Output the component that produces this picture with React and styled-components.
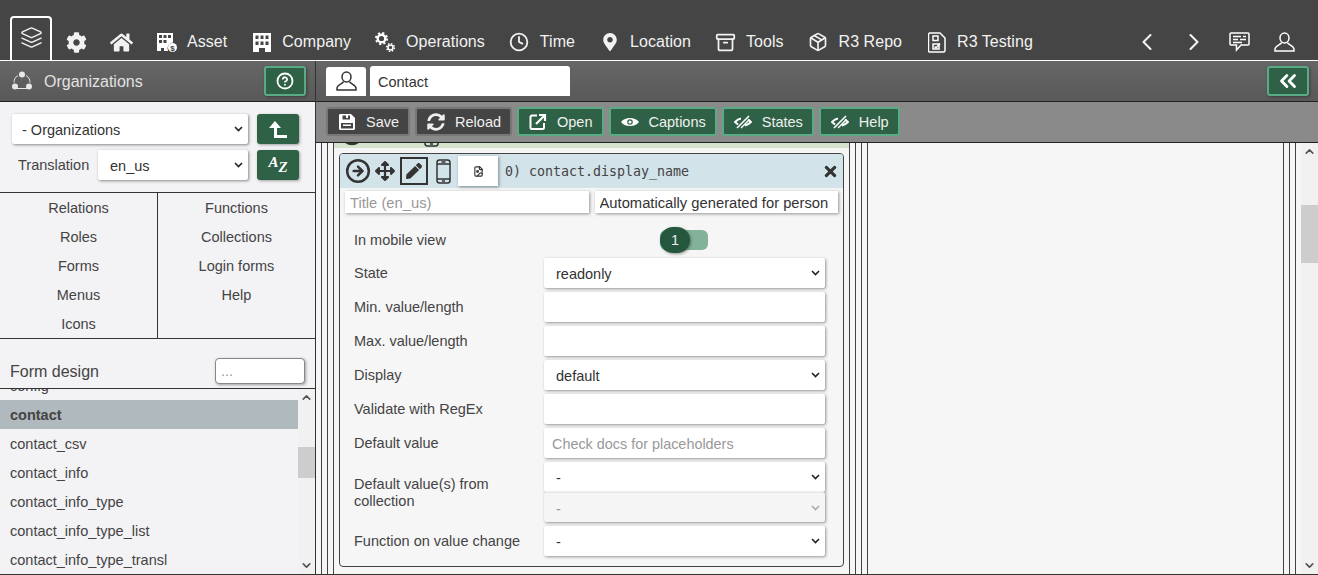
import styled, { createGlobalStyle } from "styled-components";
import {
  LuLayers, LuClock, LuArchive, LuPackage, LuChevronLeft, LuChevronRight, LuChevronsLeft,
  LuCircleHelp, LuCircleArrowRight, LuFileImage, LuChevronUp, LuChevronDown,
} from "react-icons/lu";
import { FaCog, FaHome, FaMapMarkerAlt, FaSyncAlt, FaArrowsAlt, FaPen, FaTimes } from "react-icons/fa";

const Global = createGlobalStyle`
  html, body { margin: 0; padding: 0; height: 575px; overflow: hidden; }
  body { font-family: "Liberation Sans", Arial, sans-serif; background: #f6f6f6; }
  * { box-sizing: border-box; }
`;

const white = "#fff";

const chevron = (color) =>
  `url("data:image/svg+xml,%3Csvg xmlns='http://www.w3.org/2000/svg' width='9' height='6'%3E%3Cpath d='M1 1l3.500 3.500L8 1' fill='none' stroke='${color}' stroke-width='1.600'/%3E%3C/svg%3E")`;

const AssetIcon = () => (
  <svg width="20" height="20" viewBox="0 0 20 20" fill={white}>
    <path fillRule="evenodd" d="M0 1h16v9.500a6 6 0 0 0-5 8.500H7v-3H4v3H0zM2 3v3h3V3zm4.500 0v3h3V3zM11 3v3h3V3zM2 8v3h3V8zm4.500 0v3h3V8z" />
    <circle cx="15.500" cy="15.500" r="4.500" />
    <text x="15.500" y="18.500" fontSize="8" fontWeight="700" textAnchor="middle" fill="#444" fontFamily="Liberation Sans">$</text>
  </svg>
);

const CompanyIcon = () => (
  <svg width="18" height="20" viewBox="0 0 18 20" fill={white}>
    <path fillRule="evenodd" d="M0 1h18v19h-6v-4H6v4H0zM2.500 3.500v3.500h3V3.500zm5 0v3.500h3V3.500zm5 0v3.500h3V3.500zM2.500 9.500v3.500h3V9.500zm5 0v3.500h3V9.500zm5 0v3.500h3V9.500z" />
  </svg>
);

const OperationsIcon = () => (
  <svg width="21" height="21" viewBox="0 0 21 21" fill="none" stroke={white}>
    <circle cx="6.500" cy="6.500" r="3.800" strokeWidth="2.400" />
    <circle cx="6.500" cy="6.500" r="5.600" strokeWidth="1.800" strokeDasharray="2.200 2.200" />
    <circle cx="15.500" cy="15.500" r="2.500" strokeWidth="1.600" />
    <circle cx="15.500" cy="15.500" r="3.900" strokeWidth="1.400" strokeDasharray="1.530 1.530" />
  </svg>
);

const TestingIcon = () => (
  <svg width="18" height="21" viewBox="0 0 18 21" fill="none" stroke={white} strokeWidth="1.500">
    <path d="M1.500 1h10.500l5 5v12.500a1.500 1.500 0 0 1-1.500 1.500h-14a1 1 0 0 1-1-1V2z" />
    <rect x="5" y="4" width="5" height="4.500" />
    <rect x="5" y="12" width="6" height="5" />
    <path d="M6.500 14.500l1.500 1.500 4-4.500" />
  </svg>
);

const ChatIcon = () => (
  <svg width="21" height="20" viewBox="0 0 21 20" fill="none" stroke={white} strokeWidth="1.500">
    <path d="M2 1h17a1 1 0 0 1 1 1v10a1 1 0 0 1-1 1h-7l-4.500 5v-5H2a1 1 0 0 1-1-1V2a1 1 0 0 1 1-1z" />
    <path d="M4 4.500h8M14 4.500h3M4 7.500h5M11 7.500h6M4 10.500h9" strokeWidth="1.600" />
  </svg>
);

const UserIcon = ({ color = white }) => (
  <svg width="21" height="20" viewBox="0 0 21 20" fill="none" stroke={color} strokeWidth="1.500">
    <ellipse cx="10.500" cy="6" rx="4.500" ry="5" />
    <path d="M7.500 10.500c0 2-6.500 3-6.500 6.500v2h19v-2c0-3.500-6.500-4.500-6.500-6.500" />
  </svg>
);

const OrgIcon = () => (
  <svg width="20" height="20" viewBox="0 0 20 20" fill="#e8e8e8">
    <path d="M6 4.500a8 8 0 0 0-4 7M14 4.500a8 8 0 0 1 4 7M5 17.500h10" fill="none" stroke="#e8e8e8" strokeWidth="1" />
    <circle cx="10" cy="3.500" r="3" />
    <circle cx="3" cy="15.500" r="3" />
    <circle cx="17" cy="15.500" r="3" />
  </svg>
);

const SaveIcon = () => (
  <svg width="18" height="18" viewBox="0 0 18 18" fill={white}>
    <path fillRule="evenodd" d="M2 1h11l4 4v10.500a1.500 1.500 0 0 1-1.500 1.500h-13A1.500 1.500 0 0 1 1 15.500v-13A1.500 1.500 0 0 1 2 1zm2.500 1.500v4h7.500v-4h-2v2.500h-2V2.500zM3 10v5.500h12V10zm2 1.500h8V13H5zm0 2.200h8" />
  </svg>
);

const OpenIcon = () => (
  <svg width="18" height="18" viewBox="0 0 18 18" fill="none" stroke={white} strokeWidth="2">
    <path d="M8 2.500H3a1.500 1.500 0 0 0-1.500 1.500v10.500A1.500 1.500 0 0 0 3 16h10.500a1.500 1.500 0 0 0 1.500-1.500V10" />
    <path d="M7 11l8-8M10 2h6v6" strokeWidth="2.200" />
  </svg>
);

const EyeIcon = () => (
  <svg width="18" height="18" viewBox="0 0 18 18" fill={white}>
    <path fillRule="evenodd" d="M0 9c2.500-3 5.500-4 9-4s6.500 1 9 4c-2.500 3-5.500 4-9 4s-6.500-1-9-4zm9-2.800a2.800 2.800 0 1 0 0 5.600 2.800 2.800 0 0 0 0-5.600z" />
    <circle cx="9" cy="9" r="1.600" />
  </svg>
);

const StatesIcon = () => (
  <svg width="18" height="18" viewBox="0 0 18 18" fill="none" stroke={white} strokeWidth="1.800">
    <path d="M7 5.500c-2.500.5-4.500 2-6 3.500 1 1 2 1.800 3.200 2.400M11 12.500c2.500-.5 4.500-2 6-3.500-1-1-2-1.800-3.200-2.400" />
    <path d="M3 15L15 3" strokeWidth="1.600" />
    <path d="M7 15L15.500 6.500" strokeWidth="1.400" />
  </svg>
);

const PhoneIcon = () => (
  <svg width="15" height="25" viewBox="0 0 15 25" fill="none" stroke="#333" strokeWidth="1.500">
    <rect x="1" y="1" width="13" height="23" rx="2.500" />
    <path d="M1 5h13M1 20h13M5.500 3h4M6 22h3" />
  </svg>
);

const UpTurnIcon = () => (
  <svg width="18" height="17" viewBox="0 0 18 17" fill={white}>
    <path d="M6 0l6 7H8v7h10v3H5V7H0z" />
  </svg>
);

const navItems = [
  { label: "Asset", icon: <AssetIcon /> },
  { label: "Company", icon: <CompanyIcon /> },
  { label: "Operations", icon: <OperationsIcon /> },
  { label: "Time", icon: <LuClock size={20} strokeWidth={2.2} /> },
  { label: "Location", icon: <FaMapMarkerAlt size={18} /> },
  { label: "Tools", icon: <LuArchive size={21} strokeWidth={2} /> },
  { label: "R3 Repo", icon: <LuPackage size={20} strokeWidth={2} /> },
  { label: "R3 Testing", icon: <TestingIcon /> },
];

const menuLeft = ["Relations", "Roles", "Forms", "Menus", "Icons"];
const menuRight = ["Functions", "Collections", "Login forms", "Help"];
const listItems = ["contact_csv", "contact_info", "contact_info_type", "contact_info_type_list", "contact_info_type_transl"];

const toolButtons = [
  { label: "Save", icon: <SaveIcon />, dark: true },
  { label: "Reload", icon: <FaSyncAlt size={18} />, dark: true },
  { label: "Open", icon: <OpenIcon /> },
  { label: "Captions", icon: <EyeIcon /> },
  { label: "States", icon: <StatesIcon /> },
  { label: "Help", icon: <StatesIcon /> },
];

const Scrollbar = ({ top, height }) => (
  <Track>
    <Arrow><LuChevronUp size={13} strokeWidth={3} /></Arrow>
    <Thumb $top={top} $height={height} />
    <ArrowBottom><LuChevronDown size={13} strokeWidth={3} /></ArrowBottom>
  </Track>
);

const App = () => {
  return (
    <>
      <Global />
      <Page>
        <TopBar>
          <ActiveTab><LuLayers size={23} strokeWidth={1.5} /></ActiveTab>
          <IconItem><FaCog size={21} /></IconItem>
          <IconItem><FaHome size={23} /></IconItem>
          {navItems.map((item) => (
            <NavItem key={item.label}>
              <NavIcon>{item.icon}</NavIcon>
              {item.label}
            </NavItem>
          ))}
          <NavRight>
            <RightIcon $w={46}><LuChevronLeft size={28} strokeWidth={1.8} /></RightIcon>
            <RightIcon $w={48}><LuChevronRight size={28} strokeWidth={1.8} /></RightIcon>
            <RightIcon $w={43}><ChatIcon /></RightIcon>
            <RightIcon $w={46}><UserIcon /></RightIcon>
          </NavRight>
        </TopBar>
        <Body>
          <Sidebar>
            <HeadBar>
              <OrgIcon />
              <HeadTitle>Organizations</HeadTitle>
              <GreenSquare $outlined><LuCircleHelp size={18} strokeWidth={2.4} /></GreenSquare>
            </HeadBar>
            <Selects>
              <SelectRow>
                <SideSelect $wide defaultValue="org">
                  <option value="org">- Organizations</option>
                </SideSelect>
                <GreenSquare><UpTurnIcon /></GreenSquare>
              </SelectRow>
              <SelectRow>
                <TransLabel>Translation</TransLabel>
                <SideSelect defaultValue="en_us">
                  <option value="en_us">en_us</option>
                </SideSelect>
                <GreenSquare>
                  <AzMark>A<AzLow>Z</AzLow></AzMark>
                </GreenSquare>
              </SelectRow>
            </Selects>
            <Menu>
              <MenuCol>
                {menuLeft.map((m) => <MenuLink key={m}>{m}</MenuLink>)}
              </MenuCol>
              <MenuCol>
                {menuRight.map((m) => <MenuLink key={m}>{m}</MenuLink>)}
              </MenuCol>
            </Menu>
            <DesignHead>
              <DesignTitle>Form design</DesignTitle>
              <SearchInput placeholder="..." />
            </DesignHead>
            <ListWrap>
              <List>
                <ClippedRow>config</ClippedRow>
                <ListRow $active>contact</ListRow>
                {listItems.map((l) => <ListRow key={l}>{l}</ListRow>)}
              </List>
              <Scrollbar top={41} height={31} />
            </ListWrap>
          </Sidebar>
          <Main>
            <TabBar>
              <UserTile><UserIcon color="#333" /></UserTile>
              <ContactTab>Contact</ContactTab>
              <TabBarEnd>
                <GreenSquare $outlined><LuChevronsLeft size={26} strokeWidth={2.6} /></GreenSquare>
              </TabBarEnd>
            </TabBar>
            <Toolbar>
              {toolButtons.map((b) => (
                <ToolButton key={b.label} $dark={b.dark}>
                  {b.icon}
                  {b.label}
                </ToolButton>
              ))}
            </Toolbar>
            <ScrollArea>
              <Content>
                <OuterBox>
                  <LeftBox>
                    <InnerBox>
                      <GreenBand>
                        <BandIcons>
                          <LuCircleArrowRight size={24} strokeWidth={2.4} />
                          <FaArrowsAlt size={20} />
                          <PhoneIcon />
                        </BandIcons>
                      </GreenBand>
                      <Card>
                        <CardHead>
                          <LuCircleArrowRight size={26} strokeWidth={2.3} />
                          <MoveWrap><FaArrowsAlt size={20} /></MoveWrap>
                          <PencilBox><FaPen size={16} /></PencilBox>
                          <PhoneWrap><PhoneIcon /></PhoneWrap>
                          <FieldTile><LuFileImage size={11} strokeWidth={2.4} /></FieldTile>
                          <FieldName>0) contact.display_name</FieldName>
                          <CloseWrap><FaTimes size={17} /></CloseWrap>
                        </CardHead>
                        <TitleRow>
                          <TitleInput placeholder="Title (en_us)" />
                          <TitleInput defaultValue="Automatically generated for person" />
                        </TitleRow>
                        <FormGrid>
                          <FieldLabel>In mobile view</FieldLabel>
                          <ToggleCell>
                            <ToggleTrack><ToggleKnob>1</ToggleKnob></ToggleTrack>
                          </ToggleCell>
                          <FieldLabel>State</FieldLabel>
                          <FieldSelect defaultValue="readonly"><option value="readonly">readonly</option></FieldSelect>
                          <FieldLabel>Min. value/length</FieldLabel>
                          <FieldInput />
                          <FieldLabel>Max. value/length</FieldLabel>
                          <FieldInput />
                          <FieldLabel>Display</FieldLabel>
                          <FieldSelect defaultValue="default"><option value="default">default</option></FieldSelect>
                          <FieldLabel>Validate with RegEx</FieldLabel>
                          <FieldInput />
                          <FieldLabel>Default value</FieldLabel>
                          <FieldInput placeholder="Check docs for placeholders" />
                          <FieldLabel $pushed>Default value(s) from collection</FieldLabel>
                          <SelectStack>
                            <FieldSelect defaultValue="-"><option value="-">-</option></FieldSelect>
                            <FieldSelect disabled defaultValue="-"><option value="-">-</option></FieldSelect>
                          </SelectStack>
                          <FieldLabel>Function on value change</FieldLabel>
                          <FieldSelect defaultValue="-"><option value="-">-</option></FieldSelect>
                        </FormGrid>
                      </Card>
                    </InnerBox>
                  </LeftBox>
                  <RightBox>
                    <RightInner />
                  </RightBox>
                </OuterBox>
              </Content>
              <Scrollbar top={45} height={58} />
            </ScrollArea>
          </Main>
        </Body>
      </Page>
    </>
  );
};

export default App;

const Page = styled.div`
  width: 1318px;
  height: 575px;
  display: flex;
  flex-direction: column;
  overflow: hidden;
  border-bottom: 1px solid #333;
`;

const TopBar = styled.div`
  height: 61px;
  flex: none;
  display: flex;
  align-items: flex-end;
  padding-left: 10px;
  background: #454545;
  border-bottom: 1px solid #fff;
  color: #f2f2f2;
`;

const ActiveTab = styled.div`
  width: 42px;
  height: 44px;
  margin-right: 2px;
  padding-bottom: 4px;
  display: flex;
  align-items: center;
  justify-content: center;
  border: 2px solid #fff;
  border-bottom: none;
  border-radius: 4px 4px 0 0;
`;

const IconItem = styled.div`
  width: 45px;
  height: 44px;
  padding-top: 8px;
  display: flex;
  align-items: center;
  justify-content: center;
  flex: none;
`;

const NavItem = styled.div`
  height: 44px;
  padding: 8px 12px 0;
  display: flex;
  align-items: center;
  gap: 10px;
  font-size: 16px;
  letter-spacing: 0.05px;
  white-space: nowrap;
`;

const NavIcon = styled.span`
  width: 21px;
  display: flex;
  justify-content: center;
  align-items: center;
`;

const NavRight = styled.div`
  margin-left: auto;
  padding-right: 11px;
  display: flex;
`;

const RightIcon = styled.div`
  width: ${(p) => p.$w}px;
  height: 44px;
  padding-top: 8px;
  display: flex;
  align-items: center;
  justify-content: center;
`;

const Body = styled.div`
  flex: 1;
  min-height: 0;
  display: flex;
`;

const Sidebar = styled.div`
  width: 316px;
  flex: none;
  display: flex;
  flex-direction: column;
  background: #f3f2f5;
  border-right: 1px solid #333;
`;

const HeadBar = styled.div`
  height: 41px;
  flex: none;
  display: flex;
  align-items: center;
  padding: 0 9px 0 12px;
  background: linear-gradient(#666, #595959);
  border-bottom: 1px solid #222;
`;

const HeadTitle = styled.span`
  flex: 1;
  margin-left: 12px;
  padding-top: 2px;
  font-size: 16px;
  color: #e2e2e2;
`;

const GreenSquare = styled.div`
  width: 42px;
  height: 30px;
  flex: none;
  display: flex;
  align-items: center;
  justify-content: center;
  border-radius: 3px;
  color: #fff;
  background: #2e6145;
  border: ${(p) => (p.$outlined ? "2px solid #5aaa85" : "none")};
  box-shadow: 1px 1px 3px rgba(0, 0, 0, 0.35);
`;

const Selects = styled.div`
  height: 91px;
  flex: none;
  padding: 12px 16px 0 12px;
  display: flex;
  flex-direction: column;
  gap: 6px;
  border-bottom: 1px solid #333;
`;

const SelectRow = styled.div`
  display: flex;
  align-items: center;
`;

const SideSelect = styled.select`
  height: 30px;
  width: ${(p) => (p.$wide ? "236px" : "150px")};
  margin-right: 9px;
  padding: 2px 8px 0 ${(p) => (p.$wide ? "10px" : "12px")};
  border: none;
  border-radius: 2px;
  appearance: none;
  background: #fff ${chevron("%23222")} no-repeat right 5px center;
  color: #333;
  font: 14.5px "Liberation Sans", Arial, sans-serif;
  box-shadow: 1px 1px 3px rgba(0, 0, 0, 0.45);
`;

const TransLabel = styled.span`
  width: 86px;
  padding-left: 6px;
  font-size: 14.5px;
  color: #444;
`;

const AzMark = styled.span`
  font: italic 700 15px "Liberation Serif", serif;
  color: #fff;
  margin-top: -6px;
`;

const AzLow = styled.span`
  display: inline-block;
  transform: translateY(5px);
`;

const Menu = styled.div`
  height: 146px;
  flex: none;
  display: grid;
  grid-template-columns: 158px 157px;
  border-bottom: 1px solid #333;
`;

const MenuCol = styled.div`
  &:first-child {
    border-right: 1px solid #333;
  }
`;

const MenuLink = styled.div`
  height: 29px;
  display: flex;
  align-items: center;
  justify-content: center;
  font-size: 14.5px;
  color: #444;
`;

const DesignHead = styled.div`
  height: 50px;
  flex: none;
  display: flex;
  align-items: flex-end;
  justify-content: space-between;
  padding: 0 10px 4px;
  border-bottom: 1px solid #333;
`;

const DesignTitle = styled.span`
  font-size: 16px;
  color: #444;
  line-height: 28px;
  margin-bottom: -2px;
`;

const SearchInput = styled.input`
  width: 90px;
  height: 26px;
  padding: 0 5px;
  border: 1px solid #888;
  border-radius: 4px;
  background: #fff;
  font: 14.5px "Liberation Sans", Arial, sans-serif;
  box-shadow: 1px 1px 3px rgba(0, 0, 0, 0.35);
  &::placeholder { color: #999; }
`;

const ListWrap = styled.div`
  flex: 1;
  min-height: 0;
  display: flex;
`;

const List = styled.div`
  flex: 1;
  overflow: hidden;
`;

const ListRow = styled.div`
  height: 29px;
  display: flex;
  align-items: center;
  padding-left: 10px;
  font-size: 14.5px;
  color: #444;
  font-weight: ${(p) => (p.$active ? 700 : 400)};
  background: ${(p) => (p.$active ? "#b0b9bd" : "transparent")};
`;

const ClippedRow = styled(ListRow)`
  margin-top: -18px;
`;

const Track = styled.div`
  width: 17px;
  flex: none;
  display: flex;
  flex-direction: column;
  background: #f1f1f1;
  color: #555;
`;

const Arrow = styled.div`
  height: 17px;
  flex: none;
  display: flex;
  align-items: center;
  justify-content: center;
`;

const ArrowBottom = styled(Arrow)`
  margin-top: auto;
`;

const Thumb = styled.div`
  margin-top: ${(p) => p.$top}px;
  height: ${(p) => p.$height}px;
  background: #cdcdcd;
`;

const Main = styled.div`
  flex: 1;
  min-width: 0;
  display: flex;
  flex-direction: column;
`;

const TabBar = styled.div`
  height: 41px;
  flex: none;
  display: flex;
  align-items: center;
  padding: 0 9px 0 10px;
  background: linear-gradient(#666, #595959);
  border-bottom: 1px solid #222;
`;

const UserTile = styled.div`
  width: 40px;
  height: 29px;
  display: flex;
  align-items: center;
  justify-content: center;
  background: #fff;
  border-radius: 3px 3px 0 0;
`;

const ContactTab = styled.div`
  width: 200px;
  height: 30px;
  margin-left: 4px;
  padding: 2px 0 0 8px;
  display: flex;
  align-items: center;
  background: #fff;
  border-radius: 3px 3px 0 0;
  font-size: 14.5px;
  color: #333;
`;

const TabBarEnd = styled.div`
  margin-left: auto;
`;

const Toolbar = styled.div`
  height: 41px;
  flex: none;
  display: flex;
  align-items: center;
  gap: 5px;
  padding: 0 0 1px 10px;
  background: #8a8a8a;
  border-bottom: 1px solid #222;
`;

const ToolButton = styled.div`
  height: 29px;
  padding: 0 9px 0 10px;
  display: flex;
  align-items: center;
  gap: 10px;
  font-size: 14.5px;
  color: #f0f0f0;
  border-radius: 3px;
  background: ${(p) => (p.$dark ? "#444" : "#2e6145")};
  border: 2px solid ${(p) => (p.$dark ? "#777" : "#5aaa85")};
`;

const ScrollArea = styled.div`
  flex: 1;
  min-height: 0;
  display: flex;
`;

const Content = styled.div`
  flex: 1;
  min-width: 0;
  padding: 0 5px;
  background: #f6f6f6;
  overflow: hidden;
`;

const OuterBox = styled.div`
  height: 100%;
  padding: 0 5px;
  display: flex;
  gap: 5px;
  border-left: 1px solid #444;
  border-right: 1px solid #444;
`;

const LeftBox = styled.div`
  width: 529px;
  flex: none;
  padding: 0 5px;
  border-left: 1px solid #444;
  border-right: 1px solid #444;
`;

const InnerBox = styled.div`
  height: 100%;
  border-left: 1px solid #444;
  border-right: 1px solid #444;
`;

const RightBox = styled.div`
  flex: 1;
  padding: 0 5px;
  border-left: 1px solid #444;
  border-right: 1px solid #444;
`;

const RightInner = styled.div`
  height: 100%;
  border-left: 1px solid #444;
  border-right: 1px solid #444;
`;

const GreenBand = styled.div`
  height: 5px;
  overflow: hidden;
  background: #d4e4cc;
  color: #333;
`;

const BandIcons = styled.div`
  margin-top: -21px;
  padding-left: 6px;
  display: flex;
  gap: 20px;
`;

const Card = styled.div`
  margin: 5px 5px 0;
  height: 414px;
  width: 505px;
  border: 1px solid #444;
  border-radius: 4px;
  overflow: hidden;
`;

const CardHead = styled.div`
  height: 34px;
  display: flex;
  align-items: center;
  padding-left: 5px;
  background: #d2e3ea;
  color: #333;
`;

const MoveWrap = styled.span`
  display: flex;
  margin-left: 4px;
`;

const PencilBox = styled.span`
  width: 28px;
  height: 28px;
  margin-left: 5px;
  display: flex;
  align-items: center;
  justify-content: center;
  border: 2px solid #333;
`;

const PhoneWrap = styled.span`
  display: flex;
  margin-left: 8px;
`;

const FieldTile = styled.span`
  width: 40px;
  height: 30px;
  margin-left: 7px;
  display: flex;
  align-items: center;
  justify-content: center;
  background: #fff;
  box-shadow: 1px 1px 3px rgba(0, 0, 0, 0.4);
`;

const FieldName = styled.span`
  margin-left: 7px;
  font: 13.3px "DejaVu Sans Mono", monospace;
  color: #444;
`;

const CloseWrap = styled.span`
  margin-left: auto;
  margin-right: 4px;
  display: flex;
`;

const TitleRow = styled.div`
  display: flex;
  gap: 6px;
  padding: 3px 5px 0;
`;

const TitleInput = styled.input`
  width: 244px;
  height: 22px;
  padding: 2px 5px 0;
  border: none;
  background: #fff;
  color: #333;
  font: 14.75px "Liberation Sans", Arial, sans-serif;
  box-shadow: 1px 1px 3px rgba(0, 0, 0, 0.4);
  &::placeholder { color: #999; }
`;

const FormGrid = styled.div`
  display: grid;
  grid-template-columns: 190px 281px;
  row-gap: 4px;
  align-items: center;
  padding: 13px 0 0 14px;
`;

const FieldLabel = styled.span`
  width: 170px;
  padding-top: ${(p) => (p.$pushed ? "2px" : "0")};
  font-size: 14.5px;
  line-height: 17px;
  color: #444;
`;

const ToggleCell = styled.div`
  height: 28px;
  padding-right: 1px;
  display: flex;
  align-items: center;
  justify-content: center;
`;

const ToggleTrack = styled.div`
  width: 48px;
  height: 20px;
  display: flex;
  align-items: center;
  border-radius: 6px;
  background: #82b39a;
`;

const ToggleKnob = styled.span`
  width: 30px;
  height: 26px;
  flex: none;
  display: flex;
  align-items: center;
  justify-content: center;
  border-radius: 13px;
  background: #25573e;
  color: #eee;
  font-size: 14.5px;
  box-shadow: 1px 1px 3px rgba(0, 0, 0, 0.4);
`;

const FieldSelect = styled.select`
  width: 281px;
  height: 30px;
  display: block;
  padding: 2px 8px 0 12px;
  border: none;
  border-top: ${(p) => (p.disabled ? "1px solid #e6e6e6" : "none")};
  border-radius: 2px;
  appearance: none;
  background: ${(p) => (p.disabled ? "#f5f5f5" : "#fff")} ${(p) => chevron(p.disabled ? "%23aaa" : "%23222")} no-repeat right 5px center;
  color: ${(p) => (p.disabled ? "#999" : "#333")};
  opacity: 1;
  font: 14.5px "Liberation Sans", Arial, sans-serif;
  box-shadow: 1px 1px 3px rgba(0, 0, 0, 0.4);
`;

const FieldInput = styled.input`
  width: 281px;
  height: 30px;
  padding: 2px 8px 0;
  border: none;
  border-radius: 2px;
  background: #fff;
  color: #333;
  font: 14.4px "Liberation Sans", Arial, sans-serif;
  box-shadow: 1px 1px 3px rgba(0, 0, 0, 0.4);
  &::placeholder { color: #999; }
`;

const SelectStack = styled.div`
  display: flex;
  flex-direction: column;
`;
